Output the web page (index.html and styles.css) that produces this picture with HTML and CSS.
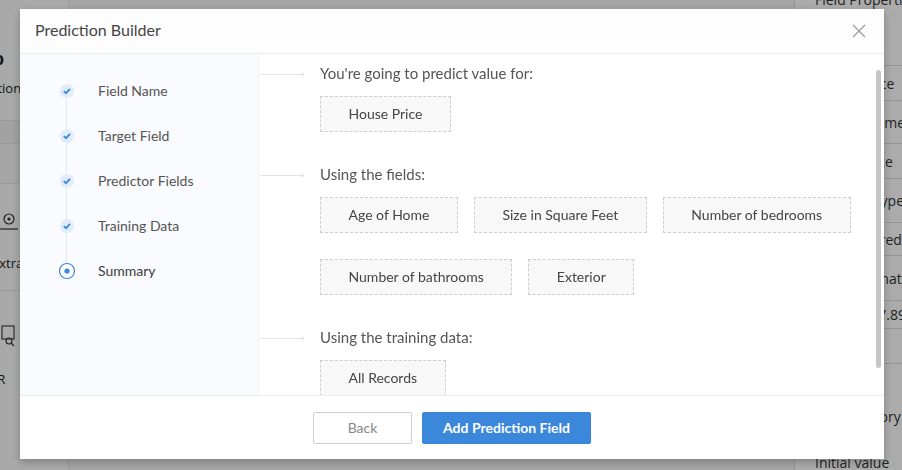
FILE: index.html
```html
<!DOCTYPE html>
<html>
<head>
  <meta charset="UTF-8">
  <title>Prediction Builder</title>
  <link rel="stylesheet" href="styles.css">
</head>
<body>
  <div class="page">
    <div class="nav">
      <div class="nav-logo">ɔ</div>
      <div class="nav-item label">Action</div>
      <div class="nav-band"></div>
      <div class="nav-band light"></div>
      <div class="nav-item icon">
        <svg width="22" height="24" viewBox="0 0 22 24"><circle cx="9" cy="9" r="5" fill="none" stroke="#333" stroke-width="1.2"/><circle cx="9" cy="9" r="1.6" fill="#333"/><line x1="0" y1="19" x2="18" y2="19" stroke="#333" stroke-width="1.2"/></svg>
      </div>
      <div class="nav-item label extra">Extras</div>
      <div class="nav-item icon second">
        <svg width="22" height="24" viewBox="0 0 22 24"><rect x="2" y="2" width="12" height="13" fill="none" stroke="#333" stroke-width="1.1"/><circle cx="9" cy="17" r="3" fill="none" stroke="#333" stroke-width="1.1"/><line x1="11" y1="19" x2="14" y2="22" stroke="#333" stroke-width="1.1"/></svg>
      </div>
      <div class="nav-item label ocr">OCR</div>
    </div>
    <div class="main"></div>
    <div class="props">
      <div class="props-title">Field Properties</div>
      <div class="props-row h35">Data Source</div>
      <div class="props-row h43">Display Name</div>
      <div class="props-row h35">House Price</div>
      <div class="props-row h44">Number Type</div>
      <div class="props-row h33">Not Required</div>
      <div class="props-row h45">Value Format</div>
      <div class="props-row h28">$1,234,567.89</div>
      <div class="props-row h35"></div>
      <div class="props-row tall">Is Mandatory</div>
      <div class="props-row plain">Initial value</div>
    </div>
  </div>

  <div class="overlay"></div>

  <div class="modal">
    <div class="modal-header">
      <span class="modal-title">Prediction Builder</span>
      <svg class="close" width="14" height="14" viewBox="0 0 14 14"><path d="M1 1 L13 13 M13 1 L1 13" stroke="#9a9a9a" stroke-width="1.2" fill="none"/></svg>
    </div>

    <div class="modal-body">
      <ul class="steps">
        <li class="step done">
          <svg class="step-icon" width="16" height="16" viewBox="0 0 16 16"><circle cx="8" cy="8" r="7" fill="#e1edfa"/><path d="M4.8 8.2 L7 10.2 L11 5.9" stroke="#3a87db" stroke-width="1.8" fill="none"/></svg>
          <span>Field Name</span>
        </li>
        <li class="step done">
          <svg class="step-icon" width="16" height="16" viewBox="0 0 16 16"><circle cx="8" cy="8" r="7" fill="#e1edfa"/><path d="M4.8 8.2 L7 10.2 L11 5.9" stroke="#3a87db" stroke-width="1.8" fill="none"/></svg>
          <span>Target Field</span>
        </li>
        <li class="step done">
          <svg class="step-icon" width="16" height="16" viewBox="0 0 16 16"><circle cx="8" cy="8" r="7" fill="#e1edfa"/><path d="M4.8 8.2 L7 10.2 L11 5.9" stroke="#3a87db" stroke-width="1.8" fill="none"/></svg>
          <span>Predictor Fields</span>
        </li>
        <li class="step done">
          <svg class="step-icon" width="16" height="16" viewBox="0 0 16 16"><circle cx="8" cy="8" r="7" fill="#e1edfa"/><path d="M4.8 8.2 L7 10.2 L11 5.9" stroke="#3a87db" stroke-width="1.8" fill="none"/></svg>
          <span>Training Data</span>
        </li>
        <li class="step current">
          <svg class="step-icon" width="18" height="18" viewBox="0 0 18 18"><circle cx="9" cy="9" r="7.5" fill="#fff" stroke="#3a87db" stroke-width="1.2"/><circle cx="9" cy="9" r="2.6" fill="#3a87db"/></svg>
          <span>Summary</span>
        </li>
      </ul>

      <div class="summary">
        <div class="section">
          <div class="section-title">You're going to predict value for:</div>
          <div class="chips">
            <div class="chip">House Price</div>
          </div>
        </div>
        <div class="section">
          <div class="section-title">Using the fields:</div>
          <div class="chips">
            <div class="chip">Age of Home</div>
            <div class="chip">Size in Square Feet</div>
            <div class="chip">Number of bedrooms</div>
            <div class="chip">Number of bathrooms</div>
            <div class="chip">Exterior</div>
          </div>
        </div>
        <div class="section">
          <div class="section-title">Using the training data:</div>
          <div class="chips">
            <div class="chip">All Records</div>
          </div>
        </div>
        <div class="scroll-thumb"></div>
      </div>
    </div>

    <div class="modal-footer">
      <button class="btn btn-back">Back</button>
      <button class="btn btn-primary">Add Prediction Field</button>
    </div>
  </div>
</body>
</html>
```

FILE: styles.css
```css
body {
  margin: 0;
  width: 902px;
  height: 470px;
  overflow: hidden;
  font-family: Lato, "Open Sans", sans-serif;
  background: #fff;
}
.page {
  display: flex;
  height: 470px;
}
.nav {
  width: 68px;
  background: #fcfcfc;
  border-right: 1px solid #e8e8e8;
  font-family: "Open Sans", sans-serif;
  font-size: 13px;
  color: #222;
  overflow: hidden;
  white-space: nowrap;
}
.nav-logo {
  height: 24px;
  padding-top: 48px;
  font-size: 18px;
  font-weight: bold;
  line-height: 20px;
  margin-left: -6px;
}
.nav-item.label {
  height: 48px;
  line-height: 32px;
  margin-left: -17px;
}
.nav-item.extra {
  height: 44px;
  line-height: 34px;
  margin-left: -8px;
  border-bottom: 1px solid #e6e6e6;
}
.nav-item.ocr {
  margin-left: -21px;
  line-height: 46px;
}
.nav-item.icon {
  height: 36px;
  padding-top: 26px;
}
.nav-item.icon.second {
  padding-top: 33px;
  height: 32px;
}
.nav-band {
  height: 22px;
  background: #f2f2f2;
  border-top: 1px solid #e6e6e6;
  border-bottom: 1px solid #e6e6e6;
}
.nav-band.light {
  height: 39px;
  background: #f7f7f7;
  border-top: none;
}
.main {
  flex: 1;
  background: #f6f6f6;
}
.props {
  width: 107px;
  border-left: 1px solid #ddd;
  background: #fff;
  font-family: "Open Sans", sans-serif;
  font-size: 14px;
  color: #333;
  white-space: nowrap;
  overflow: hidden;
}
.props-title {
  height: 65px;
  line-height: 0;
  padding-left: 20px;
  border-bottom: 1px solid #ddd;
}
.props-row {
  padding-left: 20px;
  display: flex;
  align-items: center;
  border-bottom: 1px solid #ddd;
}
.h28 { height: 27px; }
.h33 { height: 32px; }
.h35 { height: 34px; }
.h43 { height: 42px; }
.h44 { height: 43px; }
.h45 { height: 44px; }
.props-row.tall {
  height: 80px;
  border-bottom: none;
  padding-top: 24px;
  box-sizing: border-box;
}
.props-row.plain {
  border-bottom: none;
  height: 20px;
  padding-top: 8px;
}
.overlay {
  position: fixed;
  inset: 0;
  background: rgba(0, 0, 0, 0.33);
}
.modal {
  position: fixed;
  left: 20px;
  top: 9px;
  width: 864px;
  height: 450px;
  background: #fff;
  box-shadow: 0 3px 8px rgba(0, 0, 0, 0.25);
  display: flex;
  flex-direction: column;
}
.modal-header {
  height: 44px;
  border-bottom: 1px solid #ededed;
  background: #fdfdfd;
  display: flex;
  align-items: center;
  justify-content: space-between;
  padding: 0 18px 0 15px;
}
.modal-title {
  font-size: 16px;
  color: #444;
  margin-bottom: 3px;
}
.close {
  margin-bottom: 1px;
}
.modal-body {
  flex: 1;
  display: flex;
  overflow: hidden;
  border-bottom: 1px solid #ececec;
}
.steps {
  list-style: none;
  margin: 0;
  padding: 14px 0 0 0;
  width: 238px;
  background: #f9fbfe;
  border-right: 1px solid #f0f2f5;
}
.step {
  position: relative;
  height: 45px;
  display: flex;
  align-items: center;
  font-size: 14px;
  color: #555;
}
.step-icon {
  margin-left: 39px;
  margin-right: 23px;
  position: relative;
  z-index: 1;
}
.step.current .step-icon {
  margin-left: 38px;
  margin-right: 22px;
}
.step.current span {
  color: #3c3c3c;
}
.step.done::after {
  content: "";
  position: absolute;
  left: 46px;
  top: 22px;
  width: 1px;
  height: 45px;
  background: #dfe9f5;
}
.summary {
  position: relative;
  flex: 1;
  padding: 9px 0 0 0;
}
.section {
  margin-bottom: 32px;
}
.section-title {
  position: relative;
  padding-left: 61px;
  font-size: 15px;
  line-height: 20px;
  color: #555;
  margin-bottom: 13px;
}
.section-title::before {
  content: "";
  position: absolute;
  left: 1px;
  top: 11px;
  width: 42px;
  height: 1px;
  background: #e4e4e4;
}
.section-title::after {
  content: "";
  position: absolute;
  left: 42px;
  top: 10px;
  width: 3px;
  height: 3px;
  border-radius: 50%;
  background: #e4e4e4;
}
.chips {
  display: flex;
  flex-wrap: wrap;
  gap: 26px 16px;
  padding-left: 61px;
  padding-right: 20px;
}
.chip {
  height: 34px;
  line-height: 34px;
  padding: 0 27.5px;
  border: 1px dashed #cfcfcf;
  background: #f8f8f8;
  font-size: 14px;
  color: #444;
}
.scroll-thumb {
  position: absolute;
  right: 3px;
  top: 16px;
  width: 5px;
  height: 298px;
  border-radius: 3px;
  background: #c6c6c6;
}
.modal-footer {
  height: 63px;
  display: flex;
  align-items: center;
  justify-content: center;
  gap: 10px;
}
.btn {
  height: 32px;
  font-family: Lato, sans-serif;
  font-size: 14px;
  border-radius: 2px;
  cursor: pointer;
  padding-bottom: 2px;
}
.btn-back {
  width: 99px;
  background: #fff;
  border: 1px solid #cfcfcf;
  color: #888;
}
.btn-primary {
  width: 169px;
  background: #3a87db;
  border: 1px solid #3a87db;
  color: #fff;
  font-weight: bold;
}
```
